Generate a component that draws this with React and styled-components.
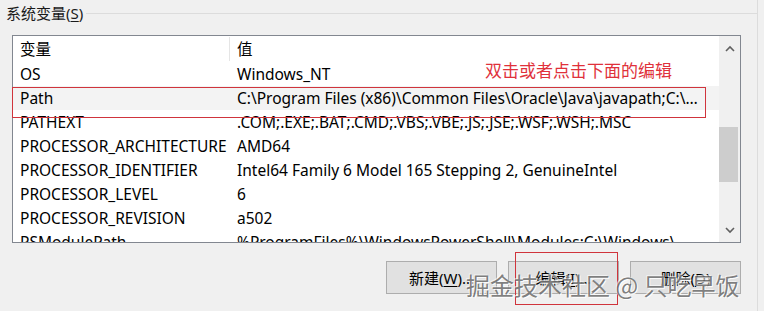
import React from "react";
import styled, { createGlobalStyle } from "styled-components";

const GlobalStyle = createGlobalStyle`
  html, body {
    margin: 0;
    padding: 0;
    background: #f0f0f0;
    font-family: "Noto Sans", "Noto Sans CJK SC", sans-serif;
    color: #000;
  }
`;

const rows = [
  { name: "OS", value: "Windows_NT" },
  {
    name: "Path",
    value: "C:\\Program Files (x86)\\Common Files\\Oracle\\Java\\javapath;C:\\W...",
    selected: true,
  },
  { name: "PATHEXT", value: ".COM;.EXE;.BAT;.CMD;.VBS;.VBE;.JS;.JSE;.WSF;.WSH;.MSC" },
  { name: "PROCESSOR_ARCHITECTURE", value: "AMD64" },
  { name: "PROCESSOR_IDENTIFIER", value: "Intel64 Family 6 Model 165 Stepping 2, GenuineIntel" },
  { name: "PROCESSOR_LEVEL", value: "6" },
  { name: "PROCESSOR_REVISION", value: "a502" },
  {
    name: "PSModulePath",
    value: "%ProgramFiles%\\WindowsPowerShell\\Modules;C:\\Windows\\...",
  },
];

export default function App() {
  return (
    <>
      <GlobalStyle />
      <Page>
        <Group>
          <GroupHead>
            <GroupLabel>
              系统变量(<u>S</u>)
            </GroupLabel>
            <Rule />
          </GroupHead>

          <ListBox>
            <Table>
              <HeaderRow>
                <HeadCell $first>变量</HeadCell>
                <HeadCell>值</HeadCell>
              </HeaderRow>
              {rows.map((r) => (
                <Row key={r.name} $selected={r.selected}>
                  <Cell $first>{r.name}</Cell>
                  <Cell>{r.value}</Cell>
                </Row>
              ))}
            </Table>
            <ScrollBar>
              <Arrow>
                <svg width="10" height="7" viewBox="0 0 10 7">
                  <path d="M1 6 L5 2 L9 6" fill="none" stroke="#606060" strokeWidth="1.6" />
                </svg>
              </Arrow>
              <Track>
                <Thumb />
              </Track>
              <Arrow>
                <svg width="10" height="7" viewBox="0 0 10 7">
                  <path d="M1 1 L5 5 L9 1" fill="none" stroke="#606060" strokeWidth="1.6" />
                </svg>
              </Arrow>
            </ScrollBar>
          </ListBox>

          <Buttons>
            <Button>
              新建(<u>W</u>)...
            </Button>
            <Button>
              编辑(<u>I</u>)...
            </Button>
            <Button>
              删除(<u>D</u>)
            </Button>
          </Buttons>
        </Group>

        <Note>双击或者点击下面的编辑</Note>
        <Mark $left={12} $top={87} $width={694} $height={31} />
        <Mark $left={515} $top={252} $width={103} $height={53} />
        <Watermark>掘金技术社区 @ 只吃早饭</Watermark>
      </Page>
    </>
  );
}

const Page = styled.div`
  position: relative;
  width: 764px;
  height: 311px;
  overflow: hidden;
`;

const Group = styled.div`
  width: 758px;
  height: 311px;
  border-right: 1px solid #dcdcdc;
  box-sizing: border-box;
`;

const GroupHead = styled.div`
  display: flex;
  align-items: center;
  height: 26px;
`;

const GroupLabel = styled.span`
  padding-left: 6px;
  padding-right: 3px;
  font-size: 15px;
  line-height: 26px;
  color: #1a1a1a;
  white-space: nowrap;
  u {
    text-decoration-thickness: 1px;
    text-underline-offset: 2px;
  }
`;

const Rule = styled.div`
  flex: 1;
  height: 1px;
  background: #dcdcdc;
`;

const ListBox = styled.div`
  display: flex;
  margin: 9px 0 0 12px;
  width: 729px;
  height: 208px;
  box-sizing: border-box;
  border: 1px solid #828790;
  background: #fff;
  overflow: hidden;
`;

const Table = styled.div`
  flex: 1;
  min-width: 0;
  overflow: hidden;
`;

const HeaderRow = styled.div`
  display: flex;
  height: 26px;
  align-items: center;
`;

const HeadCell = styled.div`
  box-sizing: border-box;
  width: ${(p) => (p.$first ? "217px" : "auto")};
  flex: ${(p) => (p.$first ? "none" : "1")};
  height: 24px;
  line-height: 24px;
  padding-left: 7px;
  font-size: 15.5px;
  border-right: ${(p) => (p.$first ? "1px solid #e5e5e5" : "none")};
`;

const Row = styled.div`
  display: flex;
  height: 24px;
  align-items: center;
  background: ${(p) => (p.$selected ? "#f3f3f3" : "transparent")};
`;

const Cell = styled.div`
  box-sizing: border-box;
  width: ${(p) => (p.$first ? "217px" : "auto")};
  flex: ${(p) => (p.$first ? "none" : "1")};
  min-width: 0;
  padding-left: 7px;
  padding-right: ${(p) => (p.$first ? "0" : "12px")};
  font-size: 15.5px;
  line-height: 24px;
  white-space: nowrap;
  overflow: hidden;
  text-overflow: ${(p) => (p.$first ? "clip" : "ellipsis")};
`;

const ScrollBar = styled.div`
  display: flex;
  flex-direction: column;
  width: 21px;
  flex: none;
  background: #f0f0f0;
`;

const Arrow = styled.div`
  display: flex;
  align-items: center;
  justify-content: center;
  height: 24px;
`;

const Track = styled.div`
  flex: 1;
  padding-top: 67px;
`;

const Thumb = styled.div`
  width: 19px;
  height: 55px;
  background: #cdcdcd;
`;

const Buttons = styled.div`
  display: flex;
  gap: 11px;
  margin: 18px 0 0 386px;
`;

const Button = styled.button`
  width: 111px;
  height: 33px;
  box-sizing: border-box;
  background: #e1e1e1;
  border: 1px solid #adadad;
  font-family: "Noto Sans", "Noto Sans CJK SC", sans-serif;
  font-size: 15px;
  color: #000;
  padding: 0;
  u {
    text-underline-offset: 2px;
  }
`;

const Note = styled.div`
  position: absolute;
  left: 485px;
  top: 58px;
  font-family: "Noto Sans CJK SC", sans-serif;
  font-size: 17px;
  line-height: 24px;
  color: #e0313b;
`;

const Mark = styled.div`
  position: absolute;
  left: ${(p) => p.$left}px;
  top: ${(p) => p.$top}px;
  width: ${(p) => p.$width}px;
  height: ${(p) => p.$height}px;
  box-sizing: border-box;
  border: 1px solid #d0343c;
  pointer-events: none;
`;

const Watermark = styled.div`
  position: absolute;
  left: 466px;
  top: 269px;
  font-family: "Noto Sans CJK SC", sans-serif;
  font-size: 24px;
  line-height: 32px;
  color: rgba(95, 95, 95, 0.8);
  text-shadow: 1px 1px 0 rgba(255, 255, 255, 0.9), -1px -1px 0 rgba(255, 255, 255, 0.6);
  white-space: nowrap;
  pointer-events: none;
`;
